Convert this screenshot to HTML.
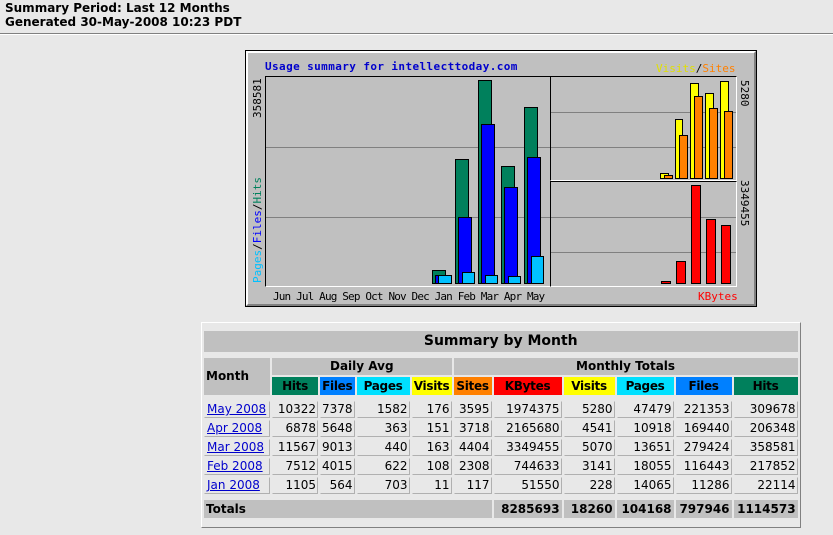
<!DOCTYPE html>
<html><head><meta charset="utf-8"><style>
body{margin:0;background:#E8E8E8;width:833px;height:535px;overflow:hidden;position:relative;font-family:"DejaVu Sans",Verdana,sans-serif}
.hd{position:absolute;left:5px;top:1px;font-weight:bold;font-size:12px;line-height:14px;color:#000}
.hr{position:absolute;left:0;top:33px;width:833px;height:0;border-top:1px solid #808080;border-bottom:1px solid #fff}
.a{position:absolute;box-sizing:border-box}
.b{position:absolute;box-sizing:border-box;border:1px solid #000}
.m{position:absolute;font-family:"DejaVu Sans Mono","Liberation Mono",monospace;font-size:11px;line-height:11px}
.g{position:absolute;height:1px;background:#808080}
table{position:absolute;left:202px;top:329px;border-collapse:separate;border-spacing:2px;table-layout:fixed;font-size:12px}
td,th{padding:0 2px;height:17px;line-height:17px;white-space:nowrap;overflow:hidden;box-sizing:border-box}
th{background:#C0C0C0;font-weight:bold;font-size:12px}
td{text-align:right;border:1px solid;border-color:#e8e8e8 #b0b0b0 #b0b0b0 #e8e8e8;padding:0 1px;height:17px;line-height:15px}
td.l{text-align:left;padding-left:2px}
tr.c th{font-size:12px;letter-spacing:-0.3px;padding:0}
a{color:#0000CC}
</style></head><body>
<div class="hd">Summary Period: Last 12 Months<br>Generated 30-May-2008 10:23 PDT</div>
<div class="hr"></div>

<div class="a" style="left:245px;top:50px;width:512px;height:257px;border:1px solid #000;background:#C0C0C0"></div>
<div class="a" style="left:246px;top:51px;width:510px;height:255px;border:2px solid;border-color:#fff #808080 #808080 #fff"></div>
<div class="m" style="left:265px;top:61px;color:#0000CC;font-weight:bold;letter-spacing:0.4px">Usage summary for intellecttoday.com</div>
<div class="m" style="left:656px;top:63px;color:#000"><span style="color:#e0e000">Visits</span>/<span style="color:#FF8000">Sites</span></div>
<div class="m" style="left:698px;top:291px;color:#FF0000">KBytes</div>
<div class="m" style="left:273px;top:291px;color:#000;font-size:11px;letter-spacing:-0.85px;word-spacing:0">Jun Jul Aug Sep Oct Nov Dec Jan Feb Mar Apr May</div>
<div class="m" style="left:252px;top:118px;transform:rotate(-90deg);transform-origin:0 0;color:#000">358581</div>
<div class="m" style="left:252px;top:283px;transform:rotate(-90deg);transform-origin:0 0;color:#000"><span style="color:#00C0FF">Pages</span>/<span style="color:#0000FF">Files</span>/<span style="color:#00805C">Hits</span></div>
<div class="m" style="left:750px;top:80px;transform:rotate(90deg);transform-origin:0 0;color:#000">5280</div>
<div class="m" style="left:750px;top:180px;transform:rotate(90deg);transform-origin:0 0;color:#000">3349455</div>

<div class="a" style="left:265px;top:76px;width:286px;height:211px;border:1px solid;border-color:#000 #fff #fff #000"></div>
<div class="g" style="left:266px;top:147px;width:284px"></div>
<div class="g" style="left:266px;top:217px;width:284px"></div>
<div class="a" style="left:550px;top:76px;width:187px;height:105px;border:1px solid;border-color:#000 #fff #fff #000"></div>
<div class="g" style="left:551px;top:112px;width:185px"></div>
<div class="g" style="left:551px;top:147px;width:185px"></div>
<div class="a" style="left:550px;top:181px;width:187px;height:106px;border:1px solid;border-color:#000 #fff #fff #000"></div>
<div class="g" style="left:551px;top:217px;width:185px"></div>
<div class="g" style="left:551px;top:252px;width:185px"></div>

<div class="b" style="left:432px;top:270px;width:14px;height:14px;background:#00805C"></div>
<div class="b" style="left:435px;top:275px;width:4px;height:9px;background:#0000FF"></div>
<div class="b" style="left:438px;top:275px;width:14px;height:9px;background:#00C0FF"></div>
<div class="b" style="left:455px;top:159px;width:14px;height:125px;background:#00805C"></div>
<div class="b" style="left:458px;top:217px;width:14px;height:67px;background:#0000FF"></div>
<div class="b" style="left:462px;top:272px;width:13px;height:12px;background:#00C0FF"></div>
<div class="b" style="left:478px;top:80px;width:14px;height:204px;background:#00805C"></div>
<div class="b" style="left:481px;top:124px;width:14px;height:160px;background:#0000FF"></div>
<div class="b" style="left:485px;top:275px;width:13px;height:9px;background:#00C0FF"></div>
<div class="b" style="left:501px;top:166px;width:14px;height:118px;background:#00805C"></div>
<div class="b" style="left:504px;top:187px;width:14px;height:97px;background:#0000FF"></div>
<div class="b" style="left:508px;top:276px;width:13px;height:8px;background:#00C0FF"></div>
<div class="b" style="left:524px;top:107px;width:14px;height:177px;background:#00805C"></div>
<div class="b" style="left:527px;top:157px;width:14px;height:127px;background:#0000FF"></div>
<div class="b" style="left:531px;top:256px;width:13px;height:28px;background:#00C0FF"></div>

<div class="b" style="left:660px;top:173px;width:9px;height:6px;background:#FFFF00"></div>
<div class="b" style="left:664px;top:175px;width:9px;height:4px;background:#FF8000"></div>
<div class="b" style="left:675px;top:119px;width:8px;height:60px;background:#FFFF00"></div>
<div class="b" style="left:679px;top:135px;width:9px;height:44px;background:#FF8000"></div>
<div class="b" style="left:690px;top:83px;width:9px;height:96px;background:#FFFF00"></div>
<div class="b" style="left:694px;top:96px;width:9px;height:83px;background:#FF8000"></div>
<div class="b" style="left:705px;top:93px;width:9px;height:86px;background:#FFFF00"></div>
<div class="b" style="left:709px;top:108px;width:9px;height:71px;background:#FF8000"></div>
<div class="b" style="left:720px;top:81px;width:9px;height:98px;background:#FFFF00"></div>
<div class="b" style="left:724px;top:111px;width:9px;height:68px;background:#FF8000"></div>

<div class="b" style="left:661px;top:281px;width:10px;height:3px;background:#FF0000"></div>
<div class="b" style="left:676px;top:261px;width:10px;height:23px;background:#FF0000"></div>
<div class="b" style="left:691px;top:185px;width:10px;height:99px;background:#FF0000"></div>
<div class="b" style="left:706px;top:219px;width:10px;height:65px;background:#FF0000"></div>
<div class="b" style="left:721px;top:225px;width:10px;height:59px;background:#FF0000"></div>

<div class="a" style="left:201px;top:322px;width:600px;height:206px;border:1px solid;border-color:#fff #808080 #808080 #fff"></div>
<table>
<colgroup><col style="width:66px"><col style="width:46px"><col style="width:29px"><col style="width:53px"><col style="width:40px"><col style="width:38px"><col style="width:68px"><col style="width:51px"><col style="width:57px"><col style="width:56px"><col style="width:64px"></colgroup>
<tr><th colspan="11" style="font-size:14px;height:21px;line-height:21px">Summary by Month</th></tr>
<tr><td colspan="11" style="height:2px;line-height:2px;border:0;padding:0"></td></tr>
<tr><th rowspan="2" style="text-align:left">Month</th><th colspan="4">Daily Avg</th><th colspan="6">Monthly Totals</th></tr>
<tr class="c">
<th style="background:#00805C;height:18px">Hits</th>
<th style="background:#0080FF">Files</th>
<th style="background:#00E0FF">Pages</th>
<th style="background:#FFFF00">Visits</th>
<th style="background:#FF8000">Sites</th>
<th style="background:#FF0000">KBytes</th>
<th style="background:#FFFF00">Visits</th>
<th style="background:#00E0FF">Pages</th>
<th style="background:#0080FF">Files</th>
<th style="background:#00805C">Hits</th></tr>
<tr><td colspan="11" style="height:2px;line-height:2px;border:0;padding:0"></td></tr>
<tr><td class="l"><a href="#">May 2008</a></td><td>10322</td><td>7378</td><td>1582</td><td>176</td><td>3595</td><td>1974375</td><td>5280</td><td>47479</td><td>221353</td><td>309678</td></tr>
<tr><td class="l"><a href="#">Apr 2008</a></td><td>6878</td><td>5648</td><td>363</td><td>151</td><td>3718</td><td>2165680</td><td>4541</td><td>10918</td><td>169440</td><td>206348</td></tr>
<tr><td class="l"><a href="#">Mar 2008</a></td><td>11567</td><td>9013</td><td>440</td><td>163</td><td>4404</td><td>3349455</td><td>5070</td><td>13651</td><td>279424</td><td>358581</td></tr>
<tr><td class="l"><a href="#">Feb 2008</a></td><td>7512</td><td>4015</td><td>622</td><td>108</td><td>2308</td><td>744633</td><td>3141</td><td>18055</td><td>116443</td><td>217852</td></tr>
<tr><td class="l"><a href="#">Jan 2008</a></td><td>1105</td><td>564</td><td>703</td><td>11</td><td>117</td><td>51550</td><td>228</td><td>14065</td><td>11286</td><td>22114</td></tr>
<tr><td colspan="11" style="height:2px;line-height:2px;border:0;padding:0"></td></tr>
<tr><th colspan="6" style="text-align:left;height:18px">Totals</th><th style="text-align:right">8285693</th><th style="text-align:right">18260</th><th style="text-align:right">104168</th><th style="text-align:right">797946</th><th style="text-align:right">1114573</th></tr>
</table>
</body></html>
